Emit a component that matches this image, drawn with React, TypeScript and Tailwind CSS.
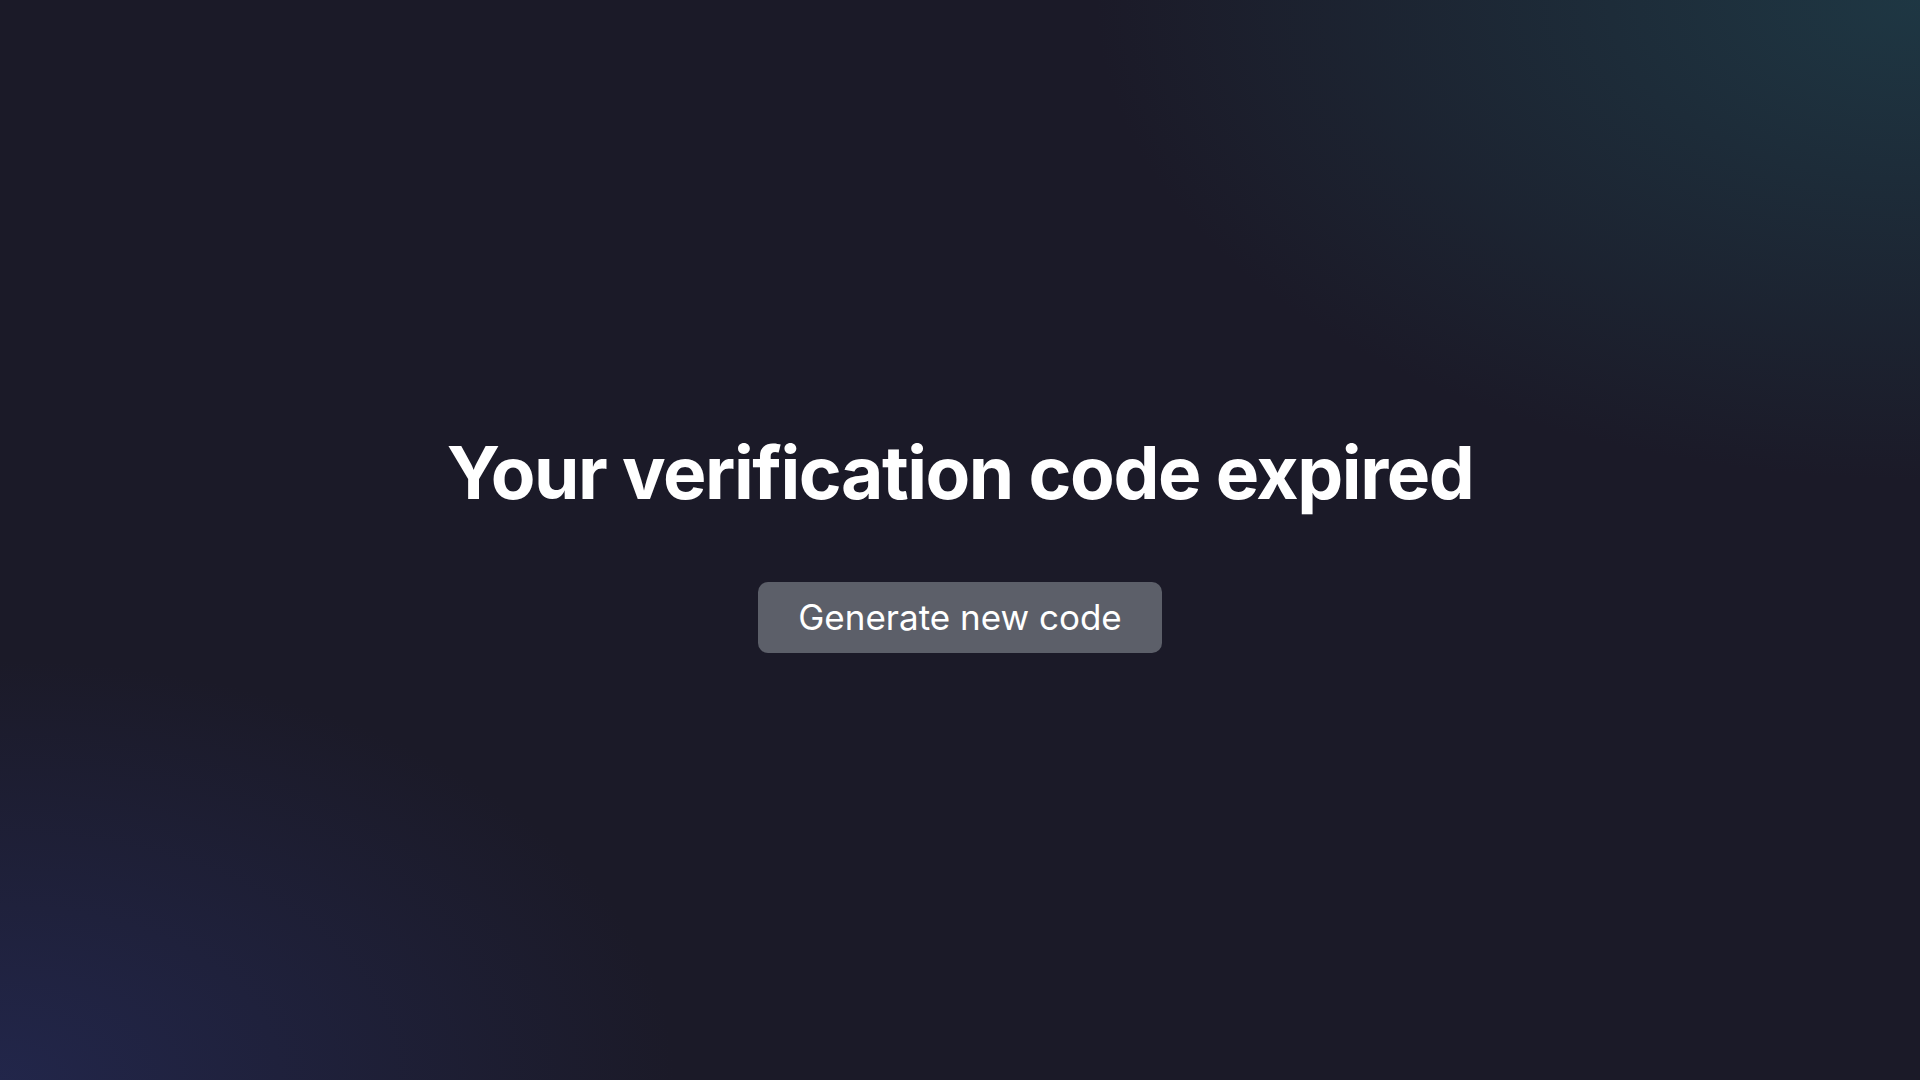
import React from 'react';

const App = () => {
  return (
    <div className="relative min-h-screen w-full overflow-hidden bg-[#1b1a28] font-['Inter',sans-serif]">
      {/* background glows */}
      <div className="pointer-events-none absolute inset-0 bg-[radial-gradient(ellipse_1100px_640px_at_100%_0%,rgba(31,62,74,0.8),transparent_75%)]" />
      <div className="pointer-events-none absolute inset-0 bg-[radial-gradient(ellipse_900px_560px_at_0%_100%,rgba(35,40,80,0.85),transparent_75%)]" />

      <div className="relative flex min-h-screen flex-col items-center justify-center pt-[8px]">
        <h1 className="text-[73px] font-bold leading-none tracking-[-0.02em] text-white">
          Your verification code expired
        </h1>
        <button className="mt-[73px] rounded-[10px] bg-[#5c5f69] px-[40px] py-[14px] text-[35px] font-normal leading-[43px] text-white">
          Generate new code
        </button>
      </div>
    </div>
  );
};

export default App;
